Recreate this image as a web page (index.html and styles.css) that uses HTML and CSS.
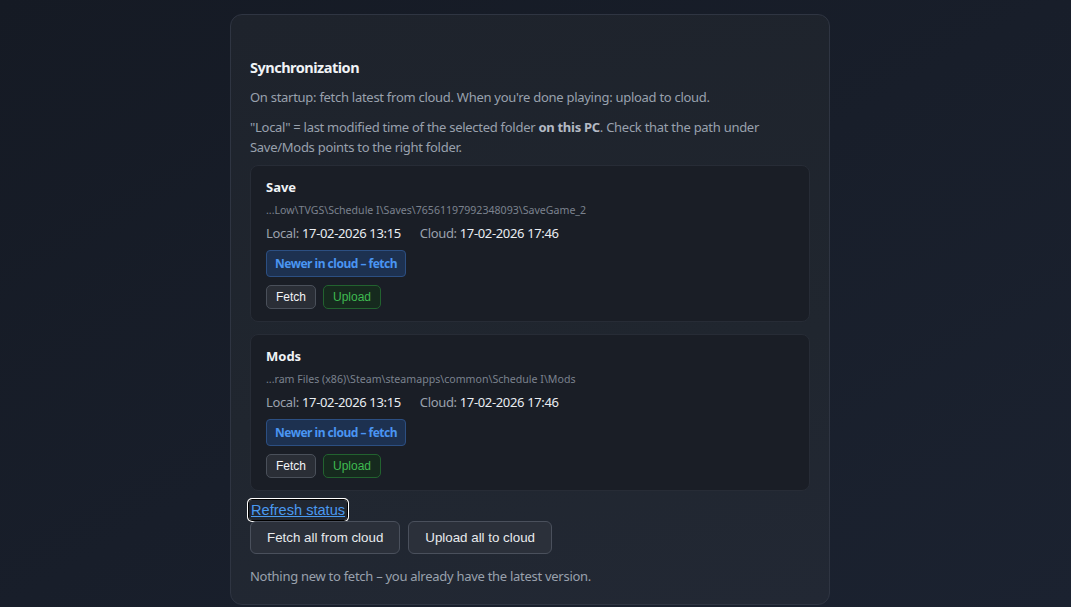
FILE: index.html
```html
<!DOCTYPE html>
<html lang="en">
<head>
<meta charset="utf-8">
<title>Synchronization</title>
<link rel="stylesheet" href="styles.css">
</head>
<body>
<main class="page">
  <section class="panel">
    <h2 class="panel-title">Synchronization</h2>
    <p class="desc">On startup: fetch latest from cloud. When you're done playing: upload to cloud.</p>
    <p class="desc desc-2">"Local" = last modified time of the selected folder <strong>on this PC</strong>. Check that the path under Save/Mods points to the right folder.</p>

    <div class="card">
      <div class="card-title">Save</div>
      <div class="card-path">...Low\TVGS\Schedule I\Saves\76561197992348093\SaveGame_2</div>
      <div class="times"><span class="lbl">Local:</span> <span class="val">17-02-2026 13:15</span><span class="lbl cloud">Cloud:</span> <span class="val">17-02-2026 17:46</span></div>
      <div class="badge">Newer in cloud – fetch</div>
      <div class="actions">
        <button class="btn-sm">Fetch</button>
        <button class="btn-sm btn-up">Upload</button>
      </div>
    </div>

    <div class="card">
      <div class="card-title">Mods</div>
      <div class="card-path">...ram Files (x86)\Steam\steamapps\common\Schedule I\Mods</div>
      <div class="times"><span class="lbl">Local:</span> <span class="val">17-02-2026 13:15</span><span class="lbl cloud">Cloud:</span> <span class="val">17-02-2026 17:46</span></div>
      <div class="badge">Newer in cloud – fetch</div>
      <div class="actions">
        <button class="btn-sm">Fetch</button>
        <button class="btn-sm btn-up">Upload</button>
      </div>
    </div>

    <button class="link-btn">Refresh status</button>
    <div class="big-actions">
      <button class="btn-lg">Fetch all from cloud</button>
      <button class="btn-lg">Upload all to cloud</button>
    </div>
    <p class="desc status">Nothing new to fetch – you already have the latest version.</p>
  </section>
</main>
</body>
</html>
```

FILE: styles.css
```css
html, body {
  margin: 0;
  height: 100%;
}
body {
  background: linear-gradient(150deg, #151a24 0%, #181e2a 50%, #1b2230 100%);
  font-family: "Noto Sans", "Open Sans", sans-serif;
  color: #e6edf3;
  overflow: hidden;
}
.page {
  display: flex;
  justify-content: center;
  padding: 14px 11px 0 0;
}
.panel {
  width: 560px;
  padding: 42px 19px 18px;
  border: 1px solid #2f3542;
  border-radius: 12px;
  background: linear-gradient(170deg, #1e232c 0%, #20262f 60%, #222834 100%);
}
.panel-title {
  margin: 0;
  font-size: 14.5px;
  line-height: 20px;
  font-weight: 700;
  letter-spacing: -0.5px;
  color: #f0f3f6;
}
.desc {
  margin: 10px 0 0;
  font-size: 13px;
  line-height: 20px;
  letter-spacing: -0.28px;
  color: #99a1ad;
}
.desc strong { color: #b4bac4; }
.card {
  margin-top: 8px;
  padding: 12px 15px;
  background: #1a1e26;
  border: 1px solid #272c36;
  border-radius: 8px;
}
.card + .card { margin-top: 12px; }
.card-title {
  font-size: 13px;
  line-height: 18px;
  font-weight: 700;
  color: #f0f3f6;
}
.card-path {
  margin-top: 6px;
  font-size: 10.6px;
  line-height: 16px;
  color: #7a828e;
}
.times {
  margin-top: 6px;
  font-size: 13px;
  line-height: 18px;
  letter-spacing: -0.35px;
}
.lbl { color: #9aa1ac; }
.val { color: #e9edf2; }
.cloud { margin-left: 19px; }
.badge {
  display: inline-block;
  margin-top: 8px;
  padding: 0 8px;
  height: 25px;
  line-height: 25px;
  font-size: 12px;
  font-weight: 700;
  letter-spacing: -0.5px;
  color: #4a95f2;
  background: #1d3150;
  border: 1px solid #2c4f82;
  border-radius: 4px;
}
.actions {
  display: flex;
  gap: 7px;
  margin-top: 8px;
}
.btn-sm {
  height: 24px;
  padding: 0 9px;
  font-family: "Liberation Sans", Arial, sans-serif;
  font-size: 12px;
  color: #f2f4f7;
  background: #2a2e36;
  border: 1px solid #4a505a;
  border-radius: 5px;
}
.btn-up {
  color: #3fb950;
  background: #162a1e;
  border-color: #22622f;
}
.link-btn {
  display: block;
  margin: 9px 0 0 -1px;
  padding: 0 2px;
  height: 20px;
  font-family: "Liberation Sans", Arial, sans-serif;
  font-size: 14.6px;
  color: #4a9af0;
  text-decoration: underline;
  background: none;
  border: none;
  border-radius: 3px;
  outline: 1px solid #000;
  box-shadow: 0 0 0 2px #fff;
}
.big-actions {
  display: flex;
  gap: 8px;
  margin-top: 1px;
}
.btn-lg {
  height: 33px;
  padding: 0 16px;
  font-family: "Liberation Sans", Arial, sans-serif;
  font-size: 13.33px;
  color: #e8eaed;
  background: #2b303a;
  border: 1px solid #4a505c;
  border-radius: 6px;
}
.status {
  margin-top: 12px;
}
```
